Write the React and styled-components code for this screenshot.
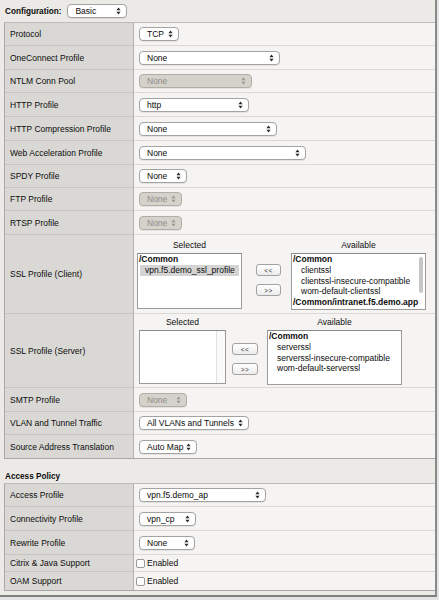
import React from 'react'
import styled, { createGlobalStyle } from 'styled-components'

const Global = createGlobalStyle`
  html, body { margin: 0; padding: 0; background: #e4e4e4; }
  body { font-family: "Liberation Sans", Arial, sans-serif; font-size: 8.5px; color: #0c0c0c; }
`;

const Frame = styled.div`
  width: 437px;
  height: 597px;
  box-sizing: border-box;
  background: #ebeae6;
  border-right: 2px solid #8a8a8a;
  border-bottom: 2px solid #7e7e7e;
  padding-left: 4px;
  display: flex;
  flex-direction: column;
`;

const Header = styled.div`
  height: 22px;
  display: flex;
  align-items: center;
  gap: 6px;
  padding-left: 1px;
`;

const Bold = styled.span`
  font-weight: bold;
  font-size: 8.2px;
`;

const Table = styled.div`
  border-top: 1px solid #bdbcb8;
  border-bottom: 1px solid #a9a8a4;
  border-left: 1px solid #aaa9a5;
`;

const Row = styled.div`
  display: grid;
  grid-template-columns: 129px 1fr;
  height: ${p => p.$h}px;
  box-sizing: border-box;
  &:last-child > div { border-bottom: none; }
`;

const Label = styled.div`
  background: #d9d8d4;
  border-right: 1px solid #b3b2ae;
  border-bottom: 1px solid #c6c5c1;
  display: flex;
  align-items: center;
  padding-left: 5px;
`;

const Value = styled.div`
  background: #f5f4f2;
  border-bottom: 1px solid #dad9d5;
  display: flex;
  align-items: ${p => (p.$top ? 'flex-start' : 'center')};
  padding-left: ${p => (p.$pad === undefined ? 5 : p.$pad)}px;
`;

const SelectBox = styled.div`
  display: inline-flex;
  align-items: center;
  justify-content: space-between;
  width: ${p => p.$w}px;
  height: 14px;
  box-sizing: border-box;
  padding: 0 5px 0 7px;
  border: 1px solid ${p => (p.$disabled ? '#b1aea7' : '#a3a3a3')};
  border-radius: 4px;
  background: ${p => (p.$disabled ? '#d5d2cb' : '#ffffff')};
  color: ${p => (p.$disabled ? '#8e8c87' : '#0a0a0a')};
  box-shadow: 0 1px 0 rgba(0, 0, 0, 0.07);
  font-size: 8.5px;
  white-space: nowrap;
`;

const Arrows = ({ color }) => (
  <svg width="5" height="8" viewBox="0 0 5 8">
    <path d="M0.4 3.3 L2.5 0.6 L4.6 3.3 Z M0.4 4.7 L2.5 7.4 L4.6 4.7 Z" fill={color} />
  </svg>
);

const Select = ({ width, disabled, children }) => (
  <SelectBox $w={width} $disabled={disabled}>
    <span>{children}</span>
    <Arrows color={disabled ? '#9a9892' : '#2a2a2a'} />
  </SelectBox>
);

const Section = styled.div`
  height: 24px;
  display: flex;
  align-items: flex-end;
  padding: 0 0 2px 1px;
  box-sizing: border-box;
`;

const Dual = styled.div`
  display: flex;
  align-items: flex-start;
  padding-top: ${p => p.$top}px;
  padding-left: ${p => p.$left}px;
`;

const Column = styled.div`
  display: flex;
  flex-direction: column;
  width: ${p => p.$w}px;
`;

const ColTitle = styled.div`
  text-align: center;
  line-height: 11px;
  margin-bottom: 2px;
`;

const ListBox = styled.div`
  position: relative;
  height: ${p => p.$h}px;
  box-sizing: border-box;
  background: #fff;
  border: 1px solid #9c9c9c;
  border-top-color: #8a8a8a;
  overflow: hidden;
`;

const Option = styled.div`
  line-height: 10.8px;
  white-space: nowrap;
  font-weight: ${p => (p.$group ? 'bold' : 'normal')};
  padding-left: ${p => (p.$group ? 1 : p.$indent)}px;
  background: ${p => (p.$sel ? '#d4d4d4' : 'transparent')};
  margin-right: ${p => (p.$sel ? 2 : 0)}px;
  margin-left: ${p => (p.$sel ? 2 : 0)}px;
`;

const Track = styled.div`
  position: absolute;
  top: 0;
  right: 0;
  bottom: 0;
  width: 8px;
  border-left: 1px solid #e2e2e2;
  background: #fafafa;
`;

const Thumb = styled.div`
  position: absolute;
  top: 3px;
  right: 2px;
  width: 4px;
  height: 36px;
  border-radius: 2px;
  background: #c6c6c6;
`;

const Buttons = styled.div`
  display: flex;
  flex-direction: column;
  gap: 8px;
  margin: ${p => p.$top}px ${p => p.$right}px 0 ${p => p.$left}px;
`;

const MoveButton = styled.div`
  width: ${p => p.$w}px;
  height: 12px;
  box-sizing: border-box;
  border: 1px solid #a2a2a2;
  border-radius: 3px;
  background: linear-gradient(#ffffff, #ececec);
  display: flex;
  align-items: center;
  justify-content: center;
  font-size: 6.5px;
  letter-spacing: 0.5px;
  color: #333;
`;

const Check = styled.span`
  width: 9px;
  height: 9px;
  box-sizing: border-box;
  border: 1px solid #9a9a9a;
  border-radius: 2px;
  background: #fff;
  margin-right: 2px;
`;

const DualList = ({ cfg, selected, available, scroll, selTrack }) => (
  <Dual $top={cfg.top} $left={cfg.left}>
    <Column $w={cfg.selW}>
      <ColTitle>Selected</ColTitle>
      <ListBox $h={cfg.h}>
        {selected.map((o, i) => (
          <Option key={i} $group={o.g} $sel={o.s} $indent={5}>{o.t}</Option>
        ))}
        {selTrack && <Track />}
      </ListBox>
    </Column>
    <Buttons $top={cfg.btnTop} $left={cfg.gapL} $right={cfg.gapR}>
      <MoveButton $w={cfg.btnW}>&lt;&lt;</MoveButton>
      <MoveButton $w={cfg.btnW}>&gt;&gt;</MoveButton>
    </Buttons>
    <Column $w={cfg.availW}>
      <ColTitle>Available</ColTitle>
      <ListBox $h={cfg.h + 1}>
        {available.map((o, i) => (
          <Option key={i} $group={o.g} $indent={9}>{o.t}</Option>
        ))}
        {scroll && <Thumb />}
      </ListBox>
    </Column>
  </Dual>
);

const config = [
  { label: 'Protocol', h: 23, w: 40, v: 'TCP' },
  { label: 'OneConnect Profile', h: 24, w: 141, v: 'None' },
  { label: 'NTLM Conn Pool', h: 23, w: 113, v: 'None', d: true },
  { label: 'HTTP Profile', h: 24, w: 110, v: 'http' },
  { label: 'HTTP Compression Profile', h: 24, w: 138, v: 'None' },
  { label: 'Web Acceleration Profile', h: 24, w: 167, v: 'None' },
  { label: 'SPDY Profile', h: 23, w: 48, v: 'None' },
  { label: 'FTP Profile', h: 23, w: 43, v: 'None', d: true },
  { label: 'RTSP Profile', h: 24, w: 43, v: 'None', d: true },
];

const configEnd = [
  { label: 'SMTP Profile', h: 24, w: 48, v: 'None', d: true },
  { label: 'VLAN and Tunnel Traffic', h: 23, w: 110, v: 'All VLANs and Tunnels' },
  { label: 'Source Address Translation', h: 23, w: 58, v: 'Auto Map' },
];

const access = [
  { label: 'Access Profile', h: 23, w: 127, v: 'vpn.f5.demo_ap' },
  { label: 'Connectivity Profile', h: 24, w: 57, v: 'vpn_cp' },
  { label: 'Rewrite Profile', h: 24, w: 56, v: 'None' },
];

const SelectRow = ({ r }) => (
  <Row $h={r.h}>
    <Label>{r.label}</Label>
    <Value>
      <Select width={r.w} disabled={r.d}>{r.v}</Select>
    </Value>
  </Row>
);

const clientCfg = { top: 5, left: 3, selW: 105, availW: 135, h: 56, btnTop: 24, gapL: 14, gapR: 10, btnW: 25 };
const serverCfg = { top: 3, left: 5, selW: 87, availW: 135, h: 54, btnTop: 26, gapL: 6, gapR: 9, btnW: 26 };

export default function App() {
  return (
    <>
      <Global />
      <Frame>
        <Header>
          <Bold>Configuration:</Bold>
          <Select width={60}>Basic</Select>
        </Header>
        <Table>
          {config.map(r => <SelectRow key={r.label} r={r} />)}
          <Row $h={79}>
            <Label>SSL Profile (Client)</Label>
            <Value $top $pad={0}>
              <DualList
                cfg={clientCfg}
                scroll
                selected={[
                  { t: '/Common', g: true },
                  { t: 'vpn.f5.demo_ssl_profile', s: true },
                ]}
                available={[
                  { t: '/Common', g: true },
                  { t: 'clientssl' },
                  { t: 'clientssl-insecure-compatible' },
                  { t: 'wom-default-clientssl' },
                  { t: '/Common/intranet.f5.demo.app', g: true },
                ]}
              />
            </Value>
          </Row>
          <Row $h={74}>
            <Label>SSL Profile (Server)</Label>
            <Value $top $pad={0}>
              <DualList
                cfg={serverCfg}
                selTrack
                selected={[]}
                available={[
                  { t: '/Common', g: true },
                  { t: 'serverssl' },
                  { t: 'serverssl-insecure-compatible' },
                  { t: 'wom-default-serverssl' },
                ]}
              />
            </Value>
          </Row>
          {configEnd.map(r => <SelectRow key={r.label} r={r} />)}
        </Table>
        <Section>
          <Bold>Access Policy</Bold>
        </Section>
        <Table>
          {access.map(r => <SelectRow key={r.label} r={r} />)}
          <Row $h={17}>
            <Label>Citrix &amp; Java Support</Label>
            <Value $pad={2}><Check />Enabled</Value>
          </Row>
          <Row $h={18}>
            <Label>OAM Support</Label>
            <Value $pad={2}><Check />Enabled</Value>
          </Row>
        </Table>
      </Frame>
    </>
  )
}
